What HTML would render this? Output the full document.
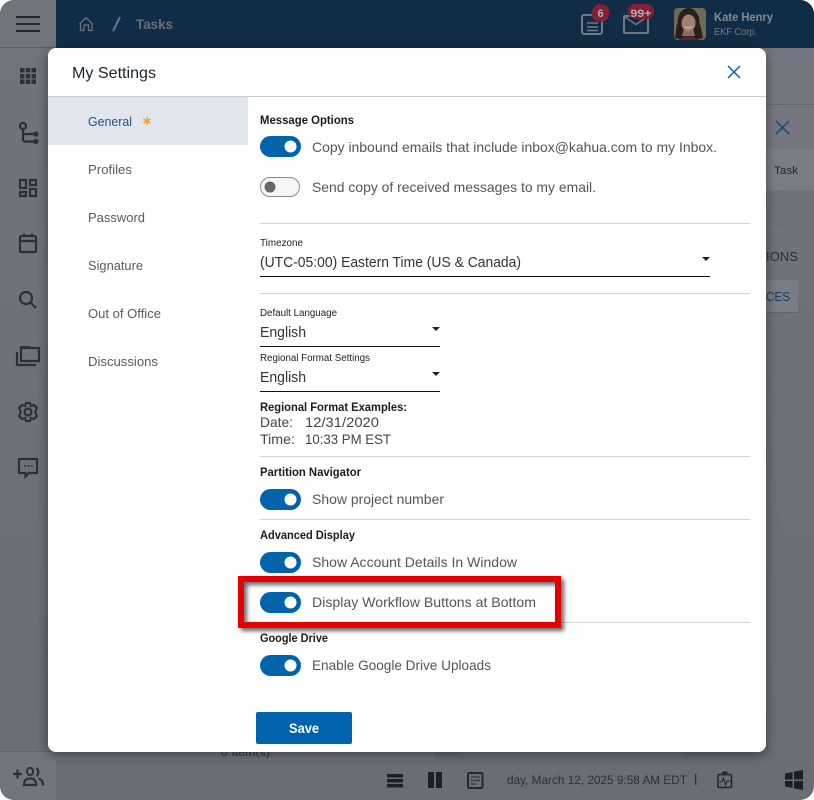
<!DOCTYPE html>
<html><head><meta charset="utf-8"><title>My Settings</title>
<style>
html,body{margin:0;padding:0;background:#fff;width:814px;height:800px;overflow:hidden}
svg{display:block}
text{font-family:"Liberation Sans",sans-serif}
.h{font-size:12px;font-weight:bold;fill:#1c1c1c}
.b{font-size:14px;fill:#555}
.m{font-size:13px;fill:#5a5a5a}
.s{font-size:10px;fill:#222}
.v{font-size:15px;fill:#333}
.ic{fill:none;stroke:#2b3038;stroke-width:2.2}
</style></head><body>
<svg width="814" height="800" viewBox="0 0 814 800" xmlns="http://www.w3.org/2000/svg">
<defs>
<filter id="sh" x="-10%" y="-10%" width="120%" height="120%"><feDropShadow dx="0" dy="3" stdDeviation="6" flood-color="#000" flood-opacity=".45"/></filter>
<filter id="rs" x="-10%" y="-20%" width="120%" height="140%"><feDropShadow dx="3" dy="3" stdDeviation="2" flood-color="#000" flood-opacity=".6"/></filter>
<linearGradient id="lg" x1="0" x2="0" y1="0" y2="1"><stop offset="0" stop-color="#71747c"/><stop offset="1" stop-color="#6a6d75"/></linearGradient>
<clipPath id="pc"><rect x="674" y="8" width="32" height="32" rx="4"/></clipPath>
<clipPath id="fr"><rect width="814" height="800" rx="14"/></clipPath>
</defs>
<g clip-path="url(#fr)">
<rect width="814" height="800" fill="url(#lg)"/>
<rect x="56" width="758" height="48" fill="#112d45"/>
<rect y="0" width="56" height="48" fill="#71747b"/>
<rect y="47" width="56" height="1" fill="#5f626a"/>
<!-- header -->
<path d="M16 17H40M16 24H40M16 31H40" stroke="#23272e" stroke-width="2" fill="none"/>
<path d="M79.500 24L86 17.700L92.500 24M80.500 23V30.500H84V25H88.500V30.500H92V23" fill="none" stroke="#66727f" stroke-width="1.300"/>
<path d="M113 31L120 17" stroke="#6d7480" stroke-width="2"/>
<text x="136" y="29" font-size="14" font-weight="bold" fill="#666e79" textLength="37" lengthAdjust="spacingAndGlyphs">Tasks</text>
<rect x="582" y="15" width="20" height="19" rx="2" fill="none" stroke="#6e7a85" stroke-width="2"/>
<path d="M587 23H598M587 27H598M587 30.500H598" stroke="#6e7a85" stroke-width="1.500"/>
<circle cx="600.500" cy="13" r="9" fill="#842035"/>
<text x="600.500" y="17" font-size="11" font-weight="bold" fill="#aeb0b5" text-anchor="middle">6</text>
<rect x="624" y="16" width="24" height="17" rx="1" fill="none" stroke="#6e7a85" stroke-width="2"/>
<path d="M625 17L636 24.500L647 17" fill="none" stroke="#6e7a85" stroke-width="1.500"/>
<rect x="628" y="4" width="26" height="15" rx="7.500" fill="#842035"/>
<text x="641" y="17" font-size="11" font-weight="bold" fill="#aeb0b5" text-anchor="middle" textLength="21" lengthAdjust="spacingAndGlyphs">99+</text>
<g clip-path="url(#pc)">
<rect x="674" y="8" width="32" height="32" fill="#6e6a58"/>
<ellipse cx="688.500" cy="22" rx="11" ry="14" fill="#2b1e1c"/>
<path d="M677 24L675 38L684 40H695L703 38L700 24Z" fill="#2b1e1c"/>
<path d="M684 28H693L695 36H682Z" fill="#8a6a5c"/>
<ellipse cx="688.500" cy="23" rx="7" ry="8.500" fill="#a0826e"/>
<path d="M684.500 26.500C686.500 28.500 690.500 28.500 692.500 26.500" stroke="#d0c0b8" stroke-width="1" fill="none"/>
<path d="M678 40L684 37H693L700 40Z" fill="#64202f"/>
</g>
<text x="714" y="21" font-size="12" font-weight="bold" fill="#7e8a95" textLength="59" lengthAdjust="spacingAndGlyphs">Kate Henry</text>
<text x="714" y="35" font-size="10" fill="#6d7a87" textLength="43" lengthAdjust="spacingAndGlyphs">EKF Corp.</text>
<!-- left rail -->
<g fill="#2b3038">
<rect x="20" y="68" width="4.500" height="4.500"/><rect x="25.800" y="68" width="4.500" height="4.500"/><rect x="31.500" y="68" width="4.500" height="4.500"/>
<rect x="20" y="74" width="4.500" height="4.500"/><rect x="25.800" y="74" width="4.500" height="4.500"/><rect x="31.500" y="74" width="4.500" height="4.500"/>
<rect x="20" y="79.500" width="4.500" height="4.500"/><rect x="25.800" y="79.500" width="4.500" height="4.500"/><rect x="31.500" y="79.500" width="4.500" height="4.500"/>
</g>
<circle class="ic" cx="23" cy="126" r="3"/><circle class="ic" cx="36" cy="134" r="1.500"/><circle class="ic" cx="36" cy="141.500" r="1.500"/>
<path class="ic" d="M23 129V139Q23 141.500 25 141.500H34M23 134H34"/>
<path class="ic" d="M20 180H26V188H20ZM30 180H36V185H30ZM20 192H26V196H20ZM30 189H36V196H30Z"/>
<rect class="ic" x="20" y="236" width="16" height="16" rx="1.500"/><path class="ic" d="M20 241H36M24 233.500V237M32 233.500V237"/>
<circle class="ic" cx="26" cy="298" r="6"/><path class="ic" stroke-width="2.500" d="M30.500 302.500L36 308"/>
<path class="ic" d="M21 348H39V361H21ZM17 352V365H36"/><path d="M20 349V346H30V349Z" fill="#2b3038"/>
<circle class="ic" cx="28" cy="412" r="3.500"/>
<path class="ic" d="M26 403H30L31 406L34 405L37 408L35.500 411L35.500 413L37 416L34 419L31 418L30 421H26L25 418L22 419L19 416L20.500 413L20.500 411L19 408L22 405L25 406Z"/>
<path class="ic" d="M19 459H37V473H29L25.500 476.500V473H19Z"/><path d="M24 466H26M27.500 466H29.500M31 466H33" stroke="#2b3038" stroke-width="1.600"/>
<!-- right background -->
<rect x="766" y="48" width="48" height="142" fill="#747780"/>
<rect x="766" y="104" width="48" height="1" fill="#64676f"/>
<path d="M776 121L789 134M789 121L776 134" stroke="#1d4a70" stroke-width="1.500"/>
<rect x="766" y="149" width="48" height="41" fill="#7a7d86"/>
<text x="774" y="174" font-size="11" fill="#24272c" textLength="24" lengthAdjust="spacingAndGlyphs">Task</text>
<rect x="766" y="231" width="32" height="1" fill="#73767e"/>
<text x="766" y="261" font-size="13" fill="#2c3038" textLength="32" lengthAdjust="spacingAndGlyphs">IONS</text>
<rect x="766" y="280" width="32" height="32" rx="2" fill="#797c85"/>
<rect x="766" y="312" width="32" height="1" fill="#5f626a"/>
<text x="766" y="301" font-size="13" fill="#1d3f5f" textLength="24" lengthAdjust="spacingAndGlyphs">CES</text>
<!-- bottom -->
<rect x="56" y="752" width="379" height="8" fill="#72757d"/>
<text x="221" y="756" font-size="10" fill="#30343a" textLength="49" lengthAdjust="spacingAndGlyphs">0 Item(s)</text>
<rect x="460" y="752" width="225" height="4" fill="#6f727a"/>
<rect x="0" y="751" width="56" height="1" fill="#5f626a"/>
<rect x="0" y="752" width="56" height="48" fill="#72757e"/>
<rect x="27" y="768" width="6" height="7" rx="3" fill="none" stroke="#2b3038" stroke-width="2"/>
<path d="M24 785C24 780 26 778.500 30 778.500C34 778.500 36 780 36 785Z" fill="none" stroke="#2b3038" stroke-width="2.200"/>
<path d="M13 774H22M17.500 769.500V778.500" stroke="#2b3038" stroke-width="2.200"/>
<path d="M36.500 768C39 770 39 774 36.500 776M38.500 778.500C42 779.500 43 782 43 785.500" stroke="#2b3038" stroke-width="2.200" fill="none"/>
<rect x="387" y="774" width="16" height="3.500" fill="#1c2129"/><rect x="387" y="779" width="16" height="3.500" fill="#1c2129"/><rect x="387" y="784" width="16" height="3.500" fill="#1c2129"/>
<rect x="428" y="772" width="6" height="16" fill="#1c2129"/><rect x="436" y="772" width="6" height="16" fill="#1c2129"/>
<rect x="468" y="773" width="14.500" height="15" rx="1.500" fill="none" stroke="#23272e" stroke-width="2"/>
<path d="M471 777H480M471 780.500H480M471 784H476" stroke="#3a3e46" stroke-width="1.500"/>
<text x="507" y="784" font-size="12" fill="#2b2f36" textLength="180" lengthAdjust="spacingAndGlyphs">day, March 12, 2025 9:58 AM EDT</text>
<rect x="695" y="774" width="1.300" height="11" fill="#2b2f36"/>
<rect x="718" y="774.500" width="13.500" height="13" rx="1" fill="none" stroke="#23272e" stroke-width="1.600"/>
<rect x="722" y="771.500" width="5.500" height="4" fill="#23272e"/>
<path d="M719 782H722L723.500 778L725.500 785L727 781H731" fill="none" stroke="#23272e" stroke-width="1"/>
<path d="M785 773.500L792.500 772V779.500H785ZM794 771.500L803 770V779.500H794ZM785 781H792.500V788L785 786.500ZM794 781H803V790L794 788.500Z" fill="#1a1f27"/>
<!-- modal -->
<rect x="48" y="48" width="718" height="704" rx="8" fill="#fff" filter="url(#sh)"/>
<text x="72" y="78" font-size="16" fill="#1a2530" textLength="84" lengthAdjust="spacingAndGlyphs">My Settings</text>
<path d="M728 66L740 78M740 66L728 78" stroke="#0063ab" stroke-width="1.500"/>
<rect x="48" y="96" width="718" height="1" fill="#ccc"/>
<rect x="48" y="97" width="200" height="48" fill="#e0e6ec"/>
<text x="88" y="126" font-size="13" fill="#1e5587" textLength="44" lengthAdjust="spacingAndGlyphs">General</text>
<path d="M147 117V125M143.500 119L150.500 123M150.500 119L143.500 123" stroke="#f59a2f" stroke-width="1.500"/>
<text class="m" x="88" y="174" textLength="44" lengthAdjust="spacingAndGlyphs">Profiles</text>
<text class="m" x="88" y="222" textLength="57" lengthAdjust="spacingAndGlyphs">Password</text>
<text class="m" x="88" y="270" textLength="55" lengthAdjust="spacingAndGlyphs">Signature</text>
<text class="m" x="88" y="318" textLength="73" lengthAdjust="spacingAndGlyphs">Out of Office</text>
<text class="m" x="88" y="366" textLength="70" lengthAdjust="spacingAndGlyphs">Discussions</text>

<text class="h" x="260" y="124" textLength="94" lengthAdjust="spacingAndGlyphs">Message Options</text>
<rect x="260" y="136" width="41" height="21" rx="10.500" fill="#0063ab"/><circle cx="290.500" cy="146.500" r="6" fill="#fff"/>
<text class="b" x="312" y="152" textLength="405" lengthAdjust="spacingAndGlyphs">Copy inbound emails that include inbox@kahua.com to my Inbox.</text>
<rect x="260.500" y="177.500" width="39" height="19" rx="9.500" fill="#f6f6f6" stroke="#8a8a8a"/><circle cx="270" cy="187" r="5.500" fill="#666"/>
<text class="b" x="312" y="192" textLength="284" lengthAdjust="spacingAndGlyphs">Send copy of received messages to my email.</text>
<rect x="260" y="223" width="490" height="1" fill="#d4d4d4"/>
<text class="s" x="260" y="246" textLength="43" lengthAdjust="spacingAndGlyphs">Timezone</text>
<text class="v" x="260" y="267" textLength="261" lengthAdjust="spacingAndGlyphs">(UTC-05:00) Eastern Time (US &amp; Canada)</text>
<path d="M702 257H710L706 261Z" fill="#222"/>
<rect x="260" y="276" width="450" height="1" fill="#111"/>
<rect x="260" y="293" width="490" height="1" fill="#d4d4d4"/>
<text class="s" x="260" y="316" textLength="77" lengthAdjust="spacingAndGlyphs">Default Language</text>
<text class="v" x="260" y="337" textLength="46" lengthAdjust="spacingAndGlyphs">English</text>
<path d="M432 327H440L436 331Z" fill="#222"/>
<rect x="260" y="346" width="180" height="1" fill="#111"/>
<text class="s" x="260" y="361" textLength="110" lengthAdjust="spacingAndGlyphs">Regional Format Settings</text>
<text class="v" x="260" y="382" textLength="46" lengthAdjust="spacingAndGlyphs">English</text>
<path d="M432 372H440L436 376Z" fill="#222"/>
<rect x="260" y="391" width="180" height="1" fill="#111"/>
<text class="h" x="260" y="411" textLength="147" lengthAdjust="spacingAndGlyphs">Regional Format Examples:</text>
<text x="260" y="427" font-size="14" fill="#444" textLength="33" lengthAdjust="spacingAndGlyphs">Date:</text>
<text x="305" y="427" font-size="14" fill="#444" textLength="74" lengthAdjust="spacingAndGlyphs">12/31/2020</text>
<text x="260" y="444" font-size="14" fill="#444" textLength="35" lengthAdjust="spacingAndGlyphs">Time:</text>
<text x="305" y="444" font-size="14" fill="#444" textLength="86" lengthAdjust="spacingAndGlyphs">10:33 PM EST</text>
<rect x="260" y="456" width="490" height="1" fill="#d4d4d4"/>
<text class="h" x="260" y="476" textLength="101" lengthAdjust="spacingAndGlyphs">Partition Navigator</text>
<rect x="260" y="489" width="41" height="21" rx="10.500" fill="#0063ab"/><circle cx="290.500" cy="499.500" r="6" fill="#fff"/>
<text class="b" x="312" y="504" textLength="132" lengthAdjust="spacingAndGlyphs">Show project number</text>
<rect x="260" y="519" width="490" height="1" fill="#d4d4d4"/>
<text class="h" x="260" y="539" textLength="95" lengthAdjust="spacingAndGlyphs">Advanced Display</text>
<rect x="260" y="552" width="41" height="21" rx="10.500" fill="#0063ab"/><circle cx="290.500" cy="562.500" r="6" fill="#fff"/>
<text class="b" x="312" y="567" textLength="205" lengthAdjust="spacingAndGlyphs">Show Account Details In Window</text>
<rect x="260" y="622" width="490" height="1" fill="#d4d4d4"/>
<rect x="241" y="579" width="317" height="46" fill="none" stroke="#e40505" stroke-width="6" filter="url(#rs)"/>
<rect x="260" y="592" width="41" height="21" rx="10.500" fill="#0063ab"/><circle cx="290.500" cy="602.500" r="6" fill="#fff"/>
<text class="b" x="312" y="607" textLength="224" lengthAdjust="spacingAndGlyphs">Display Workflow Buttons at Bottom</text>
<text class="h" x="260" y="642" textLength="68" lengthAdjust="spacingAndGlyphs">Google Drive</text>
<rect x="260" y="655" width="41" height="21" rx="10.500" fill="#0063ab"/><circle cx="290.500" cy="665.500" r="6" fill="#fff"/>
<text class="b" x="312" y="670" textLength="179" lengthAdjust="spacingAndGlyphs">Enable Google Drive Uploads</text>
<rect x="256" y="712" width="96" height="32" rx="2" fill="#0063ab"/>
<text x="304" y="733" font-size="14" font-weight="bold" fill="#fff" text-anchor="middle" textLength="30" lengthAdjust="spacingAndGlyphs">Save</text>
</g>
</svg>
</body></html>
